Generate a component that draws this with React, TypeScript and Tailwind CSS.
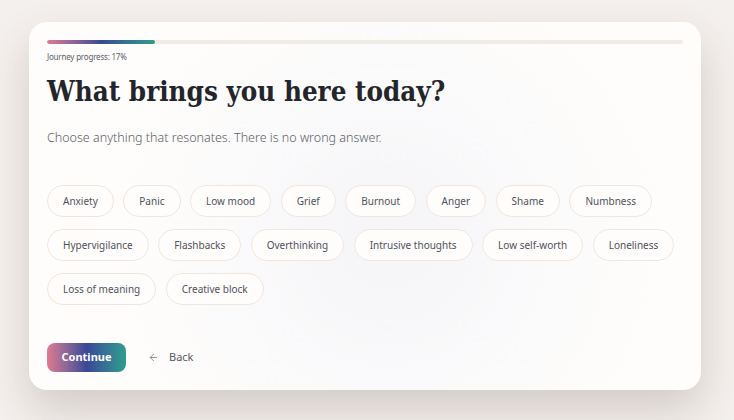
import { ArrowLeft } from 'lucide-react'

const concerns = [
  'Anxiety',
  'Panic',
  'Low mood',
  'Grief',
  'Burnout',
  'Anger',
  'Shame',
  'Numbness',
  'Hypervigilance',
  'Flashbacks',
  'Overthinking',
  'Intrusive thoughts',
  'Low self-worth',
  'Loneliness',
  'Loss of meaning',
  'Creative block',
]

export default function App() {
  return (
    <div className="min-h-[420px] w-full bg-[#f4f0ed] pl-[29px] pt-[22px] font-['Noto_Sans',sans-serif]">
      <div className="relative w-[672px] overflow-hidden rounded-[18px] bg-[#fefdfc] px-[18px] pt-[18px] pb-[18px] shadow-[0_20px_44px_rgba(80,60,50,0.2)]">
        {/* soft glow */}
        <div className="pointer-events-none absolute left-[200px] top-[60px] h-[320px] w-[320px] rounded-full bg-[#f6f6f9] blur-3xl" />

        <div className="relative">
          {/* Progress */}
          <div className="h-[4px] w-full overflow-hidden rounded-full bg-[#f1ebe5]">
            <div className="h-full w-[17%] rounded-full bg-gradient-to-r from-[#e0798f] via-[#394897] to-[#2e9d8c]" />
          </div>
          <p className="mt-[8px] text-[8px] leading-[10px] tracking-[-0.2px] text-[#5c5f68]">Journey progress: 17%</p>

          <h1 className="mt-[12px] font-['DejaVu_Serif_Condensed','DejaVu_Serif',serif] font-stretch-condensed text-[27.5px] font-bold leading-[34px] text-[#23252b]">
            What brings you here today?
          </h1>
          <p className="mt-[21px] text-[12.5px] font-light leading-[18px] text-[#5b5e66]">
            Choose anything that resonates. There is no wrong answer.
          </p>

          <div className="mt-[38px] flex flex-wrap gap-x-[9.5px] gap-y-[12px]">
            {concerns.map((c) => (
              <button
                key={c}
                className="h-[32px] rounded-full border border-[#f0e6de] bg-[#fefdfc] px-[15px] text-[10px] text-[#4f525b]"
              >
                {c}
              </button>
            ))}
          </div>

          <div className="mt-[38px] flex items-center gap-[20px]">
            <button className="h-[29px] w-[79px] rounded-[8px] bg-gradient-to-r from-[#e0798f] via-[#394897] to-[#2e9d8c] text-[11px] font-bold text-white">
              Continue
            </button>
            <button className="flex items-center gap-[10px] px-[2px] text-[11px] text-[#555861]">
              <ArrowLeft className="h-[11px] w-[11px] text-[#6b6e76]" strokeWidth={1.6} />
              Back
            </button>
          </div>
        </div>
      </div>
    </div>
  )
}
